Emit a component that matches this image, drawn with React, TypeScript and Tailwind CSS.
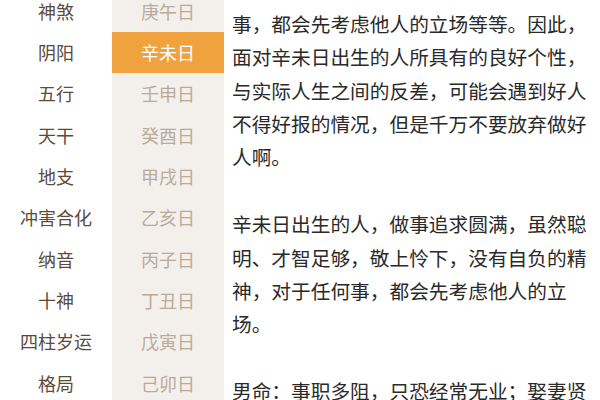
import type { ReactNode } from "react";

const labels = ["神煞", "阴阳", "五行", "天干", "地支", "冲害合化", "纳音", "十神", "四柱岁运", "格局"];
const days = ["庚午日", "辛未日", "壬申日", "癸酉日", "甲戌日", "乙亥日", "丙子日", "丁丑日", "戊寅日", "己卯日"];
const active = 1;

const paragraphs = [
  [
    "明、才智足够，敬上怜下，没有自负的精神，",
    "事，都会先考虑他人的立场等等。因此，",
    "面对辛未日出生的人所具有的良好个性，",
    "与实际人生之间的反差，可能会遇到好人",
    "不得好报的情况，但是千万不要放弃做好",
    "人啊。",
  ],
  [
    "辛未日出生的人，做事追求圆满，虽然聪",
    "明、才智足够，敬上怜下，没有自负的精",
    "神，对于任何事，都会先考虑他人的立",
    "场。",
  ],
  ["男命：事职多阻，只恐经常无业；娶妻贤"],
];

function Cell({ children, className }: { children: ReactNode; className: string }) {
  return <div className={`h-[41.35px] flex items-center justify-center text-[18px] ${className}`}>{children}</div>;
}

export default function App() {
  return (
    <div
      className="w-[600px] h-[400px] overflow-hidden bg-white flex"
      style={{ fontFamily: '"Noto Sans CJK SC", "Noto Sans", sans-serif' }}
    >
      <div className="w-[112px] shrink-0 -mt-[9.65px]">
        {labels.map((l) => (
          <Cell key={l} className="text-[#5a4b3b]">
            {l}
          </Cell>
        ))}
      </div>

      <div className="w-[112px] shrink-0 bg-[#f3f0eb]">
        <div className="-mt-[9.65px]">
          {days.map((d, i) => (
            <Cell key={d} className={i === active ? "bg-[#f0a23f] text-white" : "text-[#b9ab9b]"}>
              {d}
            </Cell>
          ))}
        </div>
      </div>

      <div className="flex-1 pl-[8px] -mt-[26.6px] text-[19.7px] leading-[33.4px] text-[#2a2a2a]">
        {paragraphs.map((p, i) => (
          <div key={i} className={i > 0 ? "mt-[33.4px]" : ""}>
            {p.map((line, j) => (
              <div key={j} className="whitespace-nowrap">
                {line}
              </div>
            ))}
          </div>
        ))}
      </div>
    </div>
  );
}
